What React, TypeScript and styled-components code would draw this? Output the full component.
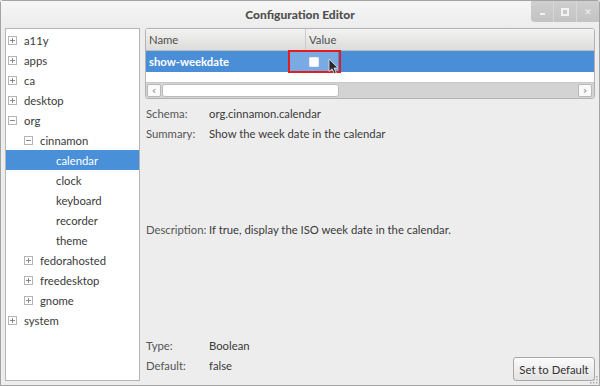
import React from "react";
import styled, { createGlobalStyle } from "styled-components";

const GlobalStyle = createGlobalStyle`
  html, body {
    margin: 0;
    padding: 0;
  }
  body {
    width: 600px;
    height: 386px;
    overflow: hidden;
    background: #ededed;
    font-family: Lato, "Open Sans", sans-serif;
    font-size: 11px;
    color: #333;
  }
`;

type TreeNode = {
  name: string;
  level: number;
  expander?: "open" | "closed";
  selected?: boolean;
};

const tree: TreeNode[] = [
  { name: "a11y", level: 0, expander: "closed" },
  { name: "apps", level: 0, expander: "closed" },
  { name: "ca", level: 0, expander: "closed" },
  { name: "desktop", level: 0, expander: "closed" },
  { name: "org", level: 0, expander: "open" },
  { name: "cinnamon", level: 1, expander: "open" },
  { name: "calendar", level: 2, selected: true },
  { name: "clock", level: 2 },
  { name: "keyboard", level: 2 },
  { name: "recorder", level: 2 },
  { name: "theme", level: 2 },
  { name: "fedorahosted", level: 1, expander: "closed" },
  { name: "freedesktop", level: 1, expander: "closed" },
  { name: "gnome", level: 1, expander: "closed" },
  { name: "system", level: 0, expander: "closed" },
];

const Expander: React.FC<{ open: boolean }> = ({ open }) => (
  <ExpanderBox width="9" height="9" viewBox="0 0 9 9">
    <rect x="0.5" y="0.5" width="8" height="8" fill="#fff" stroke="#b4b4b4" />
    <line x1="2" y1="4.5" x2="7" y2="4.5" stroke="#8a8a8a" />
    {!open && <line x1="4.5" y1="2" x2="4.5" y2="7" stroke="#8a8a8a" />}
  </ExpanderBox>
);

const Pointer = () => (
  <CursorSvg width="11" height="17" viewBox="0 0 11 17">
    <path
      d="M1 1 L1 13.5 L4 10.8 L6.3 15.6 L8.2 14.7 L6 10 L10 10 Z"
      fill="#2a2a2a"
      stroke="#e8e8e8"
      strokeWidth="0.8"
      strokeLinejoin="round"
    />
  </CursorSvg>
);

const Grip = () => (
  <GripSvg width="8" height="8" viewBox="0 0 8 8">
    {[
      [6, 0],
      [6, 3],
      [3, 3],
      [6, 6],
      [3, 6],
      [0, 6],
    ].map(([x, y]) => (
      <rect key={`${x}-${y}`} x={x} y={y} width="1.5" height="1.5" fill="#a8a8a8" />
    ))}
  </GripSvg>
);

export default function App() {
  return (
    <>
      <GlobalStyle />
      <Window>
        <TitleBar>
          <span />
          <Title>Configuration Editor</Title>
          <Controls>
            <CtrlButton>
              <MinGlyph />
            </CtrlButton>
            <CtrlButton>
              <MaxGlyph />
            </CtrlButton>
            <CtrlButton>
              <CloseGlyph>✕</CloseGlyph>
            </CtrlButton>
          </Controls>
        </TitleBar>

        <Body>
          <Tree>
            {tree.map((node) => (
              <TreeRow key={node.name} $level={node.level} $leaf={!node.expander} $selected={!!node.selected}>
                {node.expander && <Expander open={node.expander === "open"} />}
                <span>{node.name}</span>
              </TreeRow>
            ))}
          </Tree>

          <RightPane>
            <Table>
              <HeaderRow>
                <HeaderCell $divider>Name</HeaderCell>
                <HeaderCell>Value</HeaderCell>
              </HeaderRow>
              <KeyRow>
                <NameCell>show-weekdate</NameCell>
                <ValueCell>
                  <HoverTint />
                  <Check />
                  <Annotation />
                  <Pointer />
                </ValueCell>
              </KeyRow>
              <EmptyRow />
              <HScroll>
                <ScrollButton>‹</ScrollButton>
                <Slider />
                <ScrollButton $end>›</ScrollButton>
              </HScroll>
            </Table>

            <Details>
              <InfoGrid>
                <Label>Schema:</Label>
                <Value>org.cinnamon.calendar</Value>
                <Label>Summary:</Label>
                <Value>Show the week date in the calendar</Value>
              </InfoGrid>
              <DescriptionArea>
                <InfoGrid>
                  <Label>Description:</Label>
                  <Value>If true, display the ISO week date in the calendar.</Value>
                </InfoGrid>
              </DescriptionArea>
              <BottomRow>
                <InfoGrid $bottom>
                  <Label>Type:</Label>
                  <Value>Boolean</Value>
                  <Label>Default:</Label>
                  <Value>false</Value>
                </InfoGrid>
                <DefaultButton>Set to Default</DefaultButton>
              </BottomRow>
            </Details>
          </RightPane>
        </Body>
        <Grip />
      </Window>
    </>
  );
}

const Window = styled.div`
  position: relative;
  width: 600px;
  height: 386px;
  box-sizing: border-box;
  border: 1px solid #a3a3a3;
  border-radius: 3px 3px 0 0;
  background: #ededed;
  display: flex;
  flex-direction: column;
`;

const TitleBar = styled.div`
  height: 27px;
  flex-shrink: 0;
  display: grid;
  grid-template-columns: 1fr auto 1fr;
  background: linear-gradient(#f6f6f6, #ececec);
`;

const Title = styled.div`
  align-self: center;
  font-weight: 900;
  font-size: 12px;
  color: #505050;
  padding-bottom: 1px;
`;

const Controls = styled.div`
  justify-self: end;
  align-self: start;
  display: flex;
  height: 21px;
  background: linear-gradient(#cfcfcf, #c3c3c3);
  border-bottom-left-radius: 4px;
  overflow: hidden;
`;

const CtrlButton = styled.div`
  width: 22px;
  display: flex;
  align-items: center;
  justify-content: center;
  & + & {
    border-left: 1px solid #d8d8d8;
  }
`;

const MinGlyph = styled.div`
  width: 5px;
  height: 2px;
  margin-top: 5px;
  background: #f2f2f2;
`;

const MaxGlyph = styled.div`
  width: 4px;
  height: 4px;
  border: 2px solid #f2f2f2;
`;

const CloseGlyph = styled.span`
  color: #f2f2f2;
  font-family: "DejaVu Sans", sans-serif;
  font-size: 9px;
  font-weight: bold;
`;

const Body = styled.div`
  flex: 1;
  display: flex;
  padding: 0 4px 4px 4px;
  min-height: 0;
`;

const Tree = styled.div`
  width: 135px;
  box-sizing: border-box;
  border: 1px solid #b5b5b5;
  background: #fff;
  padding-top: 1px;
`;

const TreeRow = styled.div<{ $level: number; $leaf: boolean; $selected: boolean }>`
  height: 20px;
  display: flex;
  align-items: center;
  padding-left: ${(p) => 2 + p.$level * 16 + (p.$leaf ? 16 : 0)}px;
  color: ${(p) => (p.$selected ? "#fff" : "#3a3a3a")};
  background: ${(p) => (p.$selected ? "#4a90d9" : "transparent")};
  font-size: 11.3px;
`;

const ExpanderBox = styled.svg`
  flex-shrink: 0;
  margin-right: 7px;
`;

const RightPane = styled.div`
  flex: 1;
  margin-left: 5px;
  display: flex;
  flex-direction: column;
  font-size: 11.3px;
`;

const Table = styled.div`
  height: 71px;
  box-sizing: border-box;
  border: 1px solid #b3b3b3;
  border-radius: 3px;
  overflow: hidden;
  display: flex;
  flex-direction: column;
  background: #fff;
`;

const HeaderRow = styled.div`
  height: 22px;
  display: grid;
  grid-template-columns: 160px 1fr;
  background: linear-gradient(#f3f3f2, #dcdcda);
  border-bottom: 1px solid #bcbcbc;
  box-sizing: border-box;
`;

const HeaderCell = styled.div<{ $divider?: boolean }>`
  display: flex;
  align-items: center;
  padding-left: 3px;
  color: #4f4f4f;
  border-right: ${(p) => (p.$divider ? "1px solid #cbcbc9" : "none")};
`;

const KeyRow = styled.div`
  height: 21px;
  display: grid;
  grid-template-columns: 160px 1fr;
  background: #4a8ed8;
`;

const NameCell = styled.div`
  display: flex;
  align-items: center;
  padding-left: 3px;
  color: #fff;
  font-weight: bold;
`;

const ValueCell = styled.div`
  position: relative;
  display: flex;
  align-items: center;
  padding-left: 3px;
`;

const HoverTint = styled.div`
  position: absolute;
  left: -16px;
  top: 0;
  bottom: 0;
  width: 48px;
  background: #79aae4;
`;

const Check = styled.div`
  position: relative;
  width: 8px;
  height: 8px;
  background: #fdfdfd;
  border: 1px solid #e4ecf6;
  border-radius: 1px;
`;

const Annotation = styled.div`
  position: absolute;
  left: -18px;
  top: -1px;
  width: 53px;
  height: 23px;
  box-sizing: border-box;
  border: 2px solid #e31b23;
`;

const CursorSvg = styled.svg`
  position: absolute;
  left: 22px;
  top: 7px;
`;

const EmptyRow = styled.div`
  height: 10px;
  background: #fff;
`;

const HScroll = styled.div`
  flex: 1;
  display: flex;
  align-items: center;
  padding: 0 2px 0 1px;
  background: #d3d3d3;
  border-top: 1px solid #c8c8c8;
`;

const ScrollButton = styled.div<{ $end?: boolean }>`
  width: 12px;
  height: 11px;
  margin-left: ${(p) => (p.$end ? "auto" : "0")};
  display: flex;
  align-items: center;
  justify-content: center;
  background: #fafafa;
  border: 1px solid #b9b9b9;
  border-radius: 2px;
  color: #9a9a9a;
  font-family: "DejaVu Sans", sans-serif;
  font-size: 10px;
  font-weight: bold;
  line-height: 1;
`;

const Slider = styled.div`
  width: 175px;
  height: 11px;
  margin-left: 1px;
  background: #fff;
  border: 1px solid #bcbcbc;
  border-radius: 3px;
`;

const Details = styled.div`
  flex: 1;
  display: flex;
  flex-direction: column;
  padding-top: 4px;
`;

const InfoGrid = styled.div<{ $bottom?: boolean }>`
  display: grid;
  grid-template-columns: 63px auto;
  grid-auto-rows: 20px;
  align-items: center;
  padding-left: 1px;
  padding-bottom: ${(p) => (p.$bottom ? "6px" : "0")};
`;

const Label = styled.div`
  color: #555;
  white-space: nowrap;
`;

const Value = styled.div`
  color: #3a3a3a;
  white-space: nowrap;
`;

const DescriptionArea = styled.div`
  flex: 1;
  display: flex;
  flex-direction: column;
  justify-content: center;
  padding-bottom: 20px;
`;

const BottomRow = styled.div`
  display: flex;
  justify-content: space-between;
  align-items: flex-end;
`;

const DefaultButton = styled.button`
  width: 82px;
  height: 24px;
  padding: 0;
  border: 1px solid #a8a8a8;
  border-radius: 3px;
  background: linear-gradient(#fbfbfb, #e3e3e3);
  font-family: Lato, "Open Sans", sans-serif;
  font-size: 11.3px;
  color: #333;
`;

const GripSvg = styled.svg`
  position: absolute;
  right: 1px;
  bottom: 1px;
`;
